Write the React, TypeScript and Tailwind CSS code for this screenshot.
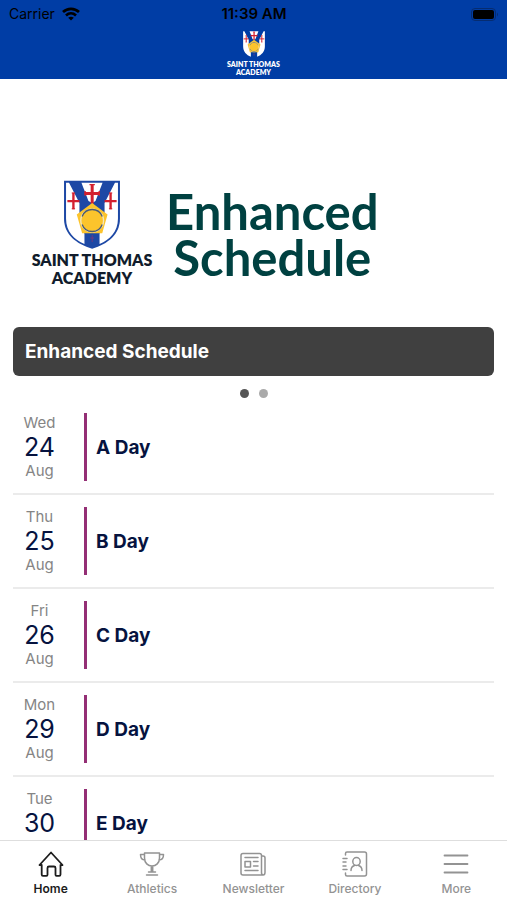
import type { ReactNode } from "react";

type Day = { weekday: string; date: string; month: string; title: string };

const days: Day[] = [
  { weekday: "Wed", date: "24", month: "Aug", title: "A Day" },
  { weekday: "Thu", date: "25", month: "Aug", title: "B Day" },
  { weekday: "Fri", date: "26", month: "Aug", title: "C Day" },
  { weekday: "Mon", date: "29", month: "Aug", title: "D Day" },
  { weekday: "Tue", date: "30", month: "Aug", title: "E Day" },
];

function Crest({ className, blue }: { className: string; blue: string }) {
  return (
    <svg viewBox="130 29 171 206" className={className} aria-hidden="true">
      <path d="M132 31H299V145C299 192 262 221 216 234C169 221 132 192 132 145Z" fill={blue} />
      <path d="M138 37H147L178 98V135L193 190V220C162 208 138 183 138 145Z" fill="#fff" />
      <path d="M293 37H284L253 98V135L238 190V220C269 208 293 183 293 145Z" fill="#fff" />
      <path d="M184 37H247L226 92L216 98L205 92Z" fill="#fff" />
      <g stroke="#d3202f" fill="none">
        <path strokeWidth="9" d="M216 42V100M193 69H239" />
        <path strokeWidth="4" d="M208 43H224M195 62V76M237 62V76" />
        <path strokeWidth="7" d="M160 67V116M142 92H178M271 67V116M253 92H289" />
        <path strokeWidth="3" d="M155 68H165M155 115H165M266 68H276M266 115H276" />
      </g>
      <path d="M216 98L262 132L246 188H186L170 132Z" fill="#fcc42c" />
      <circle cx="216" cy="150" r="34" fill="none" stroke="#f4e7bb" strokeWidth="4" />
      <path d="M186 138A32 32 0 0 1 246 138M186 162A32 32 0 0 0 246 162" fill="none" stroke="#4c5a70" strokeWidth="4" />
      <circle cx="216" cy="150" r="28" fill="#fcc42c" />
      <path d="M216 193V214M210 202H222" stroke="#6c3a80" strokeWidth="3" />
    </svg>
  );
}

function Icon({ children }: { children: ReactNode }) {
  return (
    <svg
      viewBox="0 0 26 26"
      className="size-[26px]"
      fill="none"
      stroke="currentColor"
      strokeWidth="1.5"
      strokeLinecap="round"
      strokeLinejoin="round"
      aria-hidden="true"
    >
      {children}
    </svg>
  );
}

const tabs: { label: string; icon: ReactNode }[] = [
  {
    label: "Home",
    icon: <path strokeWidth="1.8" d="M1.500 14L13 1.500L24.500 14H22.500V23.500Q22.500 24.800 21.200 24.800H18.500Q17.500 24.800 17.500 23.800V17Q17.500 15.500 16 15.500H11Q9.500 15.500 9.500 17V23.800Q9.500 24.800 8.500 24.800H5Q3.700 24.800 3.700 23.500V14Z" />,
  },
  {
    label: "Athletics",
    icon: (
      <path d="M5.500 2H20.500V7C20.500 12 17 15 13 15S5.500 12 5.500 7ZM5.500 3.500H1.500C1.500 7 3 9 6 9M20.500 3.500H24.500C24.500 7 23 9 20 9M12.300 15V21M13.700 15V21M9.500 21H16.500M7.500 24H18.500" />
    ),
  },
  {
    label: "Newsletter",
    icon: (
      <>
        <path d="M3 2.500H19.500Q21.500 2.500 21.500 4.500V21.500Q21.500 24 23.200 24T25 21.500V7Q25 5 23 5H21.500M23 24H3Q1 24 1 22V4.500Q1 2.500 3 2.500" />
        <path d="M5 6.500H18M13.500 10.500H18M13.500 15H18M5 19.500H18M5 10.500H10.500V16H5Z" />
      </>
    ),
  },
  {
    label: "Directory",
    icon: (
      <>
        <path d="M3.500 4V2.500Q3.500 1 5 1H22.500Q24.500 1 24.500 3V23Q24.500 25 22.500 25H5Q3.500 25 3.500 23.500V22M1 7.500H5M1 11H4M1 15H4M1 18.500H5" />
        <ellipse cx="14.500" cy="10.500" rx="3.700" ry="4" />
        <path d="M9 19.500C9 16.500 11 15 12.500 14.500M20 19.500C20 16.500 18 15 16.500 14.500" />
      </>
    ),
  },
  { label: "More", icon: <path strokeWidth="1.8" d="M1.500 4.500H24.500M1.500 13H24.500M1.500 21.500H24.500" /> },
];

function StatusBar() {
  return (
    <div className="grid h-7 grid-cols-3 items-center pr-2 pl-[9px] text-[14px] leading-7 text-black">
      <div className="flex items-center gap-[7px]">
        <span>Carrier</span>
        <svg viewBox="0 0 18 14" className="h-[14px] w-[18px]" fill="none" stroke="currentColor" strokeWidth="2.700" aria-label="Wi-Fi">
          <path d="M1 5C5.500 .700 12.500 .700 17 5" />
          <path d="M4 8.500C7 5.700 11 5.700 14 8.500" />
          <path d="M9 13.500L6.200 10.800Q9 8.500 11.800 10.800Z" fill="currentColor" stroke="none" />
        </svg>
      </div>
      <span className="text-center text-[15px] font-semibold whitespace-nowrap">11:39 AM</span>
      <svg viewBox="0 0 28 13" className="h-[13px] w-7 justify-self-end" aria-label="Battery full">
        <rect x=".5" y=".5" width="24" height="12" rx="3.500" fill="none" stroke="#062c70" />
        <rect x="2" y="2" width="21" height="9" rx="2" fill="#000" />
        <path d="M26 4.500Q28 6.500 26 8.500Z" fill="#062c70" />
      </svg>
    </div>
  );
}

export default function App() {
  return (
    <div className="flex h-screen flex-col bg-white font-['Inter','Liberation_Sans',sans-serif]">
      <header className="h-[79px] shrink-0 bg-[#003da5]">
        <StatusBar />
        <div className="flex flex-col items-center pt-[2px] font-['Lato',sans-serif] text-[7px] leading-[8px] font-extrabold text-white">
          <Crest className="mb-[1px] h-[29px] w-6" blue="#003da5" />
          <span>SAINT THOMAS</span>
          <span>ACADEMY</span>
        </div>
      </header>

      <main className="min-h-0 flex-1 overflow-hidden px-[13px]">
        <section className="flex h-[248px] items-start gap-3 pt-[101px] pl-[17px] font-['Lato',sans-serif]">
          <div className="flex w-[124px] flex-col items-center text-[16px] leading-[18px] font-extrabold text-[#111c2c]">
            <Crest className="mb-[2px] h-[69px] w-[58px]" blue="#1d48a5" />
            <span className="whitespace-nowrap">SAINT THOMAS</span>
            <span>ACADEMY</span>
          </div>
          <h1 className="pt-[8px] text-center text-[49px] leading-[46px] font-bold text-[#004141]">
            Enhanced
            <br />
            Schedule
          </h1>
        </section>

        <h2 className="rounded-md bg-[#404040] px-3 text-[19px] leading-[49px] font-bold text-white">
          Enhanced Schedule
        </h2>

        <div className="flex h-[25px] items-center justify-center gap-[10px] pt-[9px]">
          <button type="button" aria-label="Page 1" className="size-[9px] rounded-full bg-[#555]" />
          <button type="button" aria-label="Page 2" className="size-[9px] rounded-full bg-[#aaa]" />
        </div>

        <ul>
          {days.map((day) => (
            <li key={day.date} className="flex h-[94px] border-b-2 border-[#ebebeb] py-3">
              <div className="flex w-[53px] flex-col items-center text-[15px] leading-5 text-[#858585]">
                <span>{day.weekday}</span>
                <span className="text-[25px] leading-7 text-[#06133f]">{day.date}</span>
                <span>{day.month}</span>
              </div>
              <div className="ml-[18px] h-[68px] w-[3px] bg-[#942f75]" />
              <h3 className="ml-[9px] text-[19px] leading-[70px] font-bold text-[#06133f]">{day.title}</h3>
            </li>
          ))}
        </ul>
      </main>

      <nav className="grid h-[60px] shrink-0 grid-cols-5 border-t border-[#dedede] bg-white">
        {tabs.map(({ label, icon }, index) => (
          <a
            key={label}
            href="#"
            aria-current={index === 0 ? "page" : undefined}
            className="flex flex-col items-center gap-1 pt-[10px] text-[12px] leading-4 font-medium text-[#939393] aria-[current=page]:font-semibold aria-[current=page]:text-[#1c1c1c]"
          >
            <Icon>{icon}</Icon>
            <span>{label}</span>
          </a>
        ))}
      </nav>
    </div>
  );
}
